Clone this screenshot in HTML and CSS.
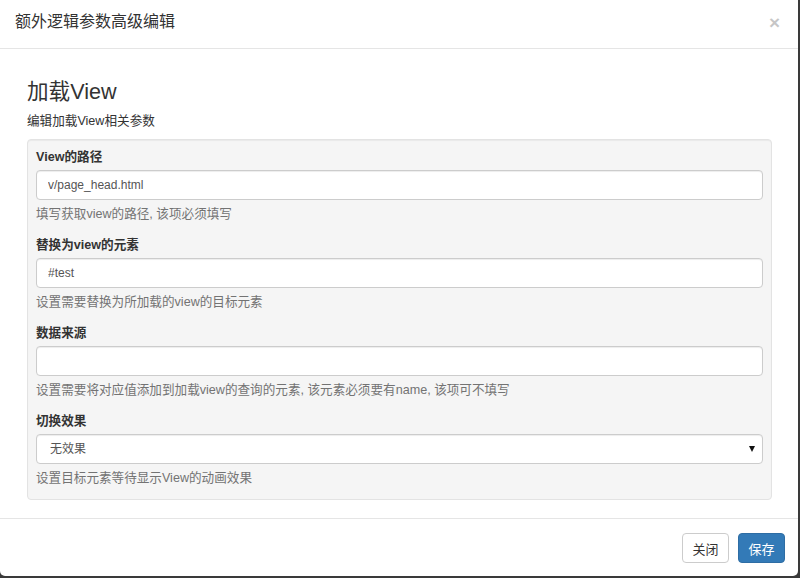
FILE: index.html
```html
<!DOCTYPE html>
<html lang="zh-CN">
<head>
<meta charset="UTF-8">
<title>额外逻辑参数高级编辑</title>
<link rel="stylesheet" href="styles.css">
</head>
<body>
    <div class="modal">
        <div class="modal-header">
            <h4 class="modal-title">额外逻辑参数高级编辑</h4>
            <button class="close" type="button">&times;</button>
        </div>

        <div class="modal-body">
            <h3 class="section-title">加载View</h3>
            <p class="section-desc">编辑加载View相关参数</p>

            <div class="well">
                <div class="form-group">
                    <label class="control-label">View的路径</label>
                    <input class="form-control" type="text" value="v/page_head.html">
                    <p class="help-block">填写获取view的路径, 该项必须填写</p>
                </div>
                <div class="form-group">
                    <label class="control-label">替换为view的元素</label>
                    <input class="form-control" type="text" value="#test">
                    <p class="help-block">设置需要替换为所加载的view的目标元素</p>
                </div>
                <div class="form-group">
                    <label class="control-label">数据来源</label>
                    <input class="form-control" type="text" value="">
                    <p class="help-block">设置需要将对应值添加到加载view的查询的元素, 该元素必须要有name, 该项可不填写</p>
                </div>
                <div class="form-group">
                    <label class="control-label">切换效果</label>
                    <div class="select-wrap">
                        <select class="form-control">
                            <option>无效果</option>
                            <option>淡入</option>
                            <option>滑动</option>
                        </select>
                        <svg class="select-arrow" width="6" height="6" viewBox="0 0 6 6"><path d="M0 0 L6 0 L3 6 Z" fill="#111"/></svg>
                    </div>
                    <p class="help-block">设置目标元素等待显示View的动画效果</p>
                </div>
            </div>
        </div>

        <div class="modal-footer">
            <button class="btn btn-default" type="button">关闭</button>
            <button class="btn btn-primary" type="button">保存</button>
        </div>
    </div>
</body>
</html>
```

FILE: styles.css
```css
body {
    margin: 0;
    padding: 0;
    background-color: #3a3a3a;
    font-family: "Liberation Sans", Arial, "Noto Sans CJK SC", sans-serif;
    font-size: 12.6px;
    color: #333;
}

.modal {
    width: 798px;
    height: 576px;
    background-color: #fff;
    border-radius: 0 0 5px 5px;
    display: flex;
    flex-direction: column;
}

.modal-header {
    height: 48px;
    padding: 0 15px;
    border-bottom: 1px solid #e5e5e5;
    display: flex;
    align-items: center;
    justify-content: space-between;
    box-sizing: border-box;
    height: 49px;
}

.modal-title {
    margin: 0;
    font-size: 16px;
    font-weight: normal;
    line-height: 20px;
    color: #333;
    padding-bottom: 4px;
}

.close {
    background: none;
    border: none;
    padding: 0;
    margin: 0 3px 4px 0;
    font-family: "Liberation Sans", Arial, sans-serif;
    font-size: 19px;
    font-weight: bold;
    line-height: 1;
    color: #000;
    opacity: 0.22;
    cursor: pointer;
}

.modal-body {
    flex: 1;
    padding: 0 26px 18px 27px;
}

.section-title {
    margin: 30px 0 0;
    font-size: 21.6px;
    font-weight: normal;
    line-height: 26px;
    color: #333;
}

.section-desc {
    margin: 6px 0 0;
    line-height: 20px;
}

.well {
    margin-top: 8px;
    padding: 7px 8px 0;
    background-color: #f5f5f5;
    border: 1px solid #e3e3e3;
    border-radius: 4px;
    box-shadow: inset 0 1px 1px rgba(0, 0, 0, 0.05);
}

.form-group {
    margin-bottom: 12px;
}

.control-label {
    display: block;
    font-weight: bold;
    line-height: 20px;
    margin-bottom: 3px;
}

.form-control {
    display: block;
    width: 100%;
    height: 30px;
    box-sizing: border-box;
    padding: 0 11px;
    font-family: "Liberation Sans", Arial, "Noto Sans CJK SC", sans-serif;
    font-size: 12px;
    color: #555;
    background-color: #fff;
    border: 1px solid #ccc;
    border-radius: 4px;
    box-shadow: inset 0 1px 1px rgba(0, 0, 0, 0.075);
    outline: none;
}

select.form-control {
    -webkit-appearance: none;
    appearance: none;
    padding-left: 13px;
}

.select-wrap {
    position: relative;
}

.select-arrow {
    position: absolute;
    right: 8px;
    top: 12px;
    pointer-events: none;
}

.help-block {
    margin: 5px 0 0;
    line-height: 18px;
    color: #737373;
}

.modal-footer {
    padding: 14px 13px 13px;
    border-top: 1px solid #e5e5e5;
    display: flex;
    justify-content: flex-end;
    gap: 9px;
}

.btn {
    width: 47px;
    height: 30px;
    padding: 0;
    font-family: "Liberation Sans", Arial, "Noto Sans CJK SC", sans-serif;
    font-size: 13px;
    border-radius: 4px;
    cursor: pointer;
}

.btn-default {
    background-color: #fff;
    border: 1px solid #ccc;
    color: #333;
}

.btn-primary {
    background-color: #337ab7;
    border: 1px solid #2e6da4;
    color: #fff;
}
```
